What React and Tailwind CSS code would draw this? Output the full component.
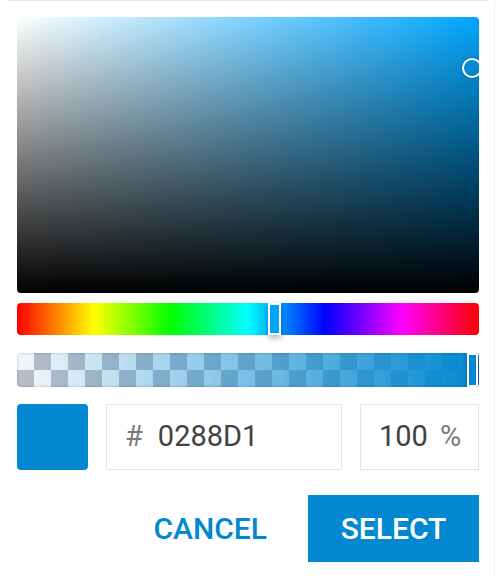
import React, { useState } from "react";

const HEX = "0288D1";

function App() {
  const [hex, setHex] = useState(HEX);
  const [alpha, setAlpha] = useState(100);

  return (
    <div className="w-[496px] h-[576px] bg-white font-['Roboto',sans-serif]">
      {/* edge of the card above */}
      <div className="mx-2 h-px bg-[#e6e6e6]" />
      <div className="h-[575px] border-r border-[#efefef] mr-px pl-[17px] pr-[15px] pt-4 flex flex-col">
        {/* saturation / value area */}
        <div className="relative h-[276px] rounded-[4px] overflow-hidden [background-image:linear-gradient(to_top,#000,rgba(0,0,0,0)),linear-gradient(to_right,#fff,#00a6ff)]">
          <div className="absolute left-[445px] top-[41px] w-5 h-5 rounded-full border-2 border-white shadow-[0_0_2px_rgba(0,0,0,0.4)]" />
        </div>

        {/* hue slider */}
        <div className="relative mt-[10px] h-8 rounded-[4px] [background-image:linear-gradient(to_right,#f00,#ff0,#0f0,#0ff,#00f,#f0f,#f00)]">
          <div className="absolute left-[251px] top-0 w-[13px] h-8 bg-[#03a6f4] border-2 border-white shadow-[0_3px_6px_rgba(0,0,0,0.3)]" />
        </div>

        {/* alpha slider */}
        <div className="relative mt-[18px] h-[34px] rounded-[4px] overflow-hidden [background-image:conic-gradient(#b9bec8_0_25%,#f5f7fa_0_50%,#b9bec8_0_75%,#f5f7fa_0)] [background-size:34px_34px]">
          <div className="h-full [background-image:linear-gradient(to_right,rgba(2,136,209,0),rgba(2,136,209,1))] shadow-[inset_0_0_3px_rgba(0,0,0,0.25)]" />
          <div className="absolute right-px top-0 w-[11px] h-[34px] bg-[#0288d1] border-2 border-white shadow-[0_2px_5px_rgba(0,0,0,0.3)]" />
        </div>

        {/* value row */}
        <div className="mt-[17px] flex h-[66px] gap-[18px]">
          <div className="w-[71px] h-full rounded-[4px] bg-[#0288d1]" />
          <div className="w-[236px] h-full border border-[#e3e3e3] flex items-center pl-[18px] text-[29px]">
            <span className="text-[#7a7a7a] mr-[15px]">#</span>
            <input
              className="w-[160px] outline-none text-[#424242] bg-transparent"
              value={hex}
              onChange={(e) => setHex(e.target.value)}
            />
          </div>
          <div className="flex-1 h-full border border-[#e3e3e3] flex items-center pl-[18px] text-[29px]">
            <input
              className="w-[52px] outline-none text-[#424242] bg-transparent"
              value={alpha}
              onChange={(e) => setAlpha(e.target.value)}
            />
            <span className="text-[#7a7a7a] ml-[9px]">%</span>
          </div>
        </div>

        {/* actions */}
        <div className="mt-[25px] flex justify-end items-center gap-[41px]">
          <button className="text-[30px] font-medium text-[#0288d1]">CANCEL</button>
          <button className="w-[171px] h-[67px] bg-[#0288d1] text-white text-[30px] font-medium">
            SELECT
          </button>
        </div>
      </div>
    </div>
  );
}

export default App;
